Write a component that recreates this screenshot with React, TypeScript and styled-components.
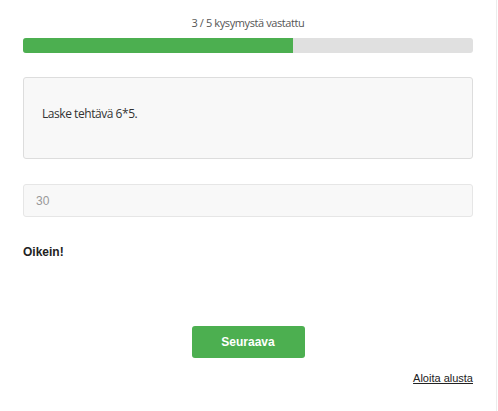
import React from "react";
import styled, { createGlobalStyle } from "styled-components";

const Global = createGlobalStyle`
  html, body { margin: 0; padding: 0; background: #fff; }
  body { font-family: "Liberation Sans", Arial, sans-serif; }
`;

const Frame = styled.div`
  width: 497px;
  min-height: 411px;
  box-sizing: border-box;
  border-right: 1px solid #ececec;
  background: #fff;
`;

const Quiz = styled.div`
  width: 450px;
  margin: 0 auto;
  padding-top: 17px;
  display: flex;
  flex-direction: column;
`;

const ProgressLabel = styled.div`
  font-family: "Open Sans", "Noto Sans", sans-serif;
  font-size: 11px;
  line-height: 11px;
  letter-spacing: -0.4px;
  color: #555;
  text-align: center;
  margin-bottom: 10px;
`;

const Track = styled.div`
  height: 15px;
  background: #e0e0e0;
  border-radius: 3px;
  overflow: hidden;
`;

const Fill = styled.div`
  height: 100%;
  background: #4caf50;
`;

const QuestionBox = styled.div`
  margin-top: 24px;
  height: 82px;
  box-sizing: border-box;
  padding: 28px 18px 0;
  background: #f8f8f8;
  border: 1px solid #dddddd;
  border-radius: 3px;
  font-family: "Open Sans", "Noto Sans", sans-serif;
  font-size: 12px;
  line-height: 16px;
  letter-spacing: -0.45px;
  color: #333;
`;

const AnswerInput = styled.input`
  margin-top: 25px;
  height: 33px;
  box-sizing: border-box;
  padding: 0 12px;
  background: #f8f8f8;
  border: 1px solid #e6e6e6;
  border-radius: 3px;
  font-family: "Liberation Sans", Arial, sans-serif;
  font-size: 12px;
  color: #999;
  outline: none;
  &:disabled { color: #999; }
`;

const Feedback = styled.div`
  margin-top: 28px;
  font-size: 12px;
  line-height: 14px;
  font-weight: bold;
  color: #222;
`;

const NextButton = styled.button`
  margin-top: 67px;
  align-self: center;
  width: 113px;
  height: 32px;
  border: none;
  border-radius: 3px;
  background: #4caf50;
  color: #fff;
  font-family: "Liberation Sans", Arial, sans-serif;
  font-size: 12px;
  font-weight: bold;
  cursor: pointer;
`;

const RestartLink = styled.a`
  margin-top: 14px;
  align-self: flex-end;
  font-size: 11px;
  line-height: 13px;
  color: #222;
  text-decoration: underline;
  cursor: pointer;
`;

export default function App() {
  const answered = 3;
  const total = 5;
  return (
    <>
      <Global />
      <Frame>
        <Quiz>
          <ProgressLabel>
            {answered} / {total} kysymystä vastattu
          </ProgressLabel>
          <Track>
            <Fill style={{ width: `${(answered / total) * 100}%` }} />
          </Track>
          <QuestionBox>Laske tehtävä 6*5.</QuestionBox>
          <AnswerInput value="30" disabled readOnly />
          <Feedback>Oikein!</Feedback>
          <NextButton>Seuraava</NextButton>
          <RestartLink>Aloita alusta</RestartLink>
        </Quiz>
      </Frame>
    </>
  );
}
